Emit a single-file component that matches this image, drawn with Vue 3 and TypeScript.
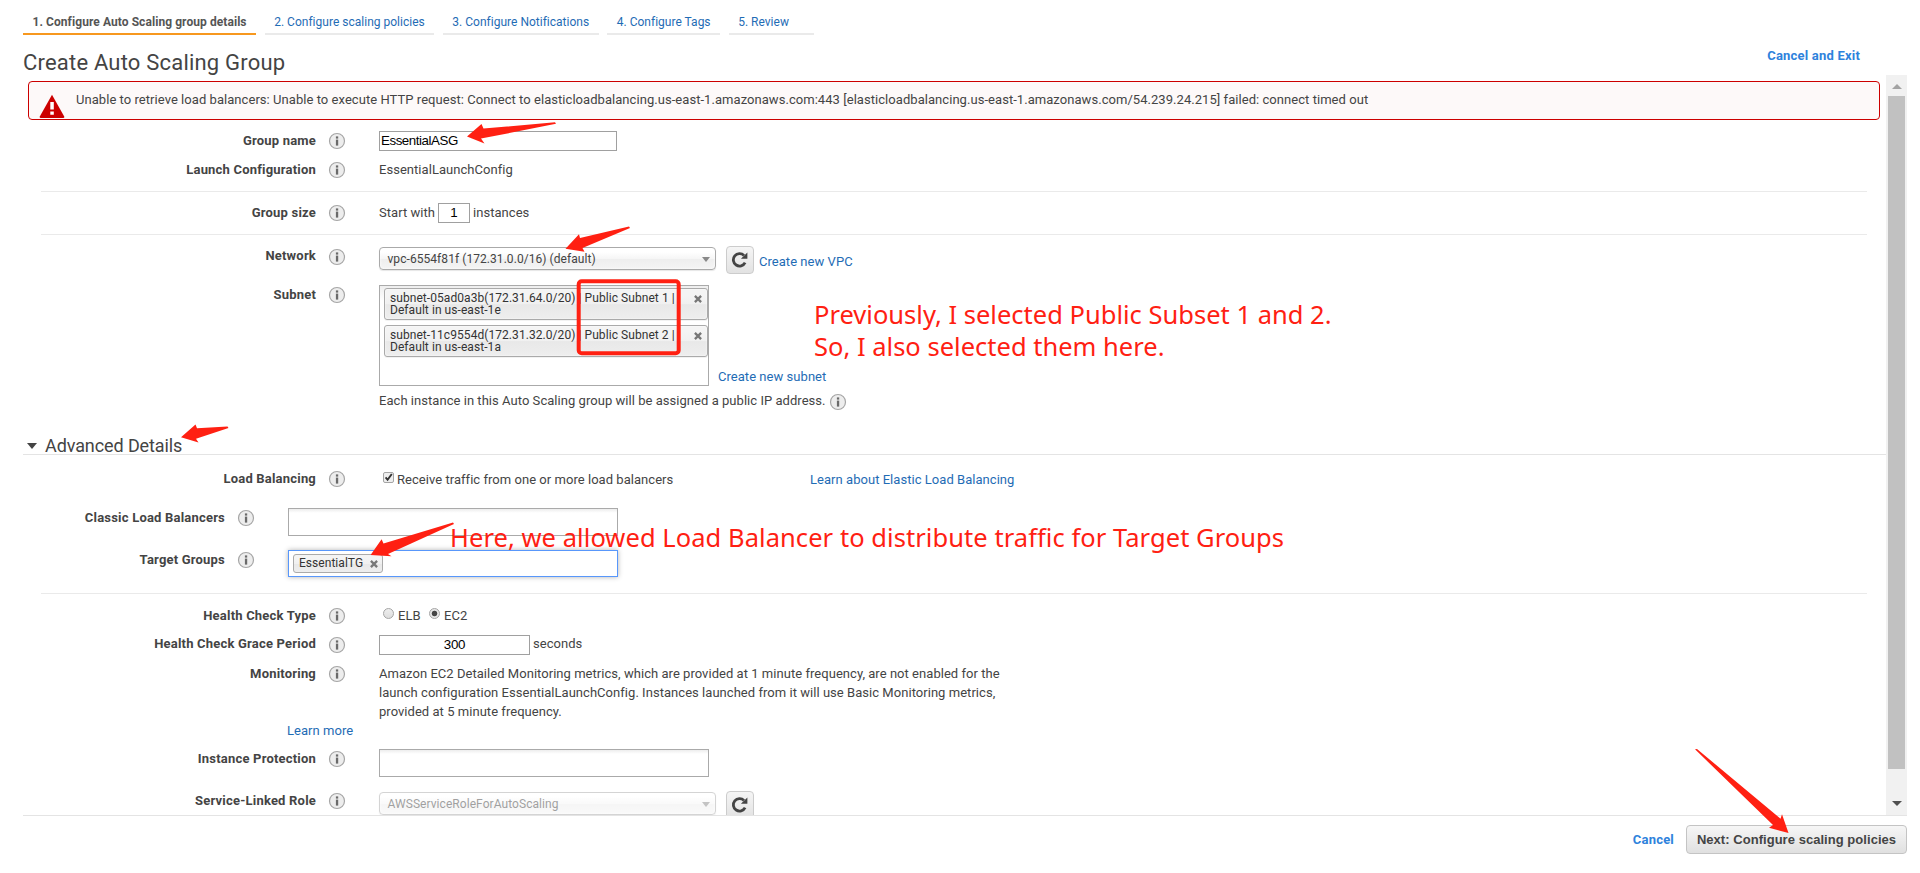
<script setup lang="ts">
import { h, type FunctionalComponent } from 'vue'

interface Step { label: string; active?: boolean }

const steps: Step[] = [
  { label: '1. Configure Auto Scaling group details', active: true },
  { label: '2. Configure scaling policies' },
  { label: '3. Configure Notifications' },
  { label: '4. Configure Tags' },
  { label: '5. Review' },
]

const subnets: string[][] = [
  ['subnet-05ad0a3b(172.31.64.0/20) | Public Subnet 1 |', 'Default in us-east-1e'],
  ['subnet-11c9554d(172.31.32.0/20) | Public Subnet 2 |', 'Default in us-east-1a'],
]

const arrows: string[] = [
  '467,136.5 481.5,124 483.5,128.5 555,122.3 556,123.8 481,138.6 484.5,143.5',
  '565.5,248.7 579,234.3 580,238 629,226.5 630,228 582.5,248 584.5,251.7',
  '181,437.3 195.5,424.5 197,428.2 227.5,426.5 228.5,428 196,438.8 198.5,442.5',
  '370.6,555 381.6,539.2 383.5,543.5 453,522.5 454,524 388,554 391.5,556.3',
  '1788.5,833 1782,814.2 1780.5,818.7 1697,749 1695,749.3 1773,825 1769,827.8',
]

const InfoIcon: FunctionalComponent = () =>
  h('svg', { width: 18, height: 18, viewBox: '0 0 18 18' }, [
    h('circle', { cx: 9, cy: 9, r: 7.5, fill: '#ededed', stroke: '#a6a6a6', 'stroke-width': 1.2 }),
    h('rect', { x: 7.9, y: 4.4, width: 2.3, height: 2.2, fill: '#6a6a6a' }),
    h('rect', { x: 7.9, y: 7.6, width: 2.3, height: 6, fill: '#6a6a6a' }),
  ])

const RefreshIcon: FunctionalComponent = () =>
  h('svg', { width: 18, height: 18, viewBox: '0 0 18 18' }, [
    h('path', { d: 'M14.1 11.6A6.2 6.2 0 1 1 13 4.5', fill: 'none', stroke: '#444', 'stroke-width': 2.8 }),
    h('path', { d: 'M16.4 1.4V7.8H9.9Z', fill: '#444' }),
  ])

const CloseIcon: FunctionalComponent = () =>
  h('svg', { width: 8, height: 8, viewBox: '0 0 8 8' }, [
    h('path', { d: 'M.9 .9L7.1 7.1M7.1 .9L.9 7.1', stroke: '#777', 'stroke-width': 2.3 }),
  ])
</script>

<template>
  <div class="page">
    <nav class="steps">
      <a v-for="s in steps" :key="s.label" class="step" :class="{ active: s.active }">{{ s.label }}</a>
    </nav>
    <header class="head">
      <h1>Create Auto Scaling Group</h1>
      <a class="exit">Cancel and Exit</a>
    </header>

    <div class="frame">
      <main class="panel">
        <div class="alert">
          <svg class="warn" width="26" height="24" viewBox="0 0 26 24">
            <path d="M13 .8 25.2 22.6Q25.8 24 24.4 24H1.6Q.2 24 .8 22.6Z" fill="#c00" />
            <path d="M11.3 8h3.5v7.6h-3.5zM11.3 17.6h3.5v3.2h-3.5z" fill="#fff" />
          </svg>
          <span class="alert-text">Unable to retrieve load balancers: Unable to execute HTTP request: Connect to elasticloadbalancing.us-east-1.amazonaws.com:443 [elasticloadbalancing.us-east-1.amazonaws.com/54.239.24.215] failed: connect timed out</span>
        </div>

        <div class="row name-row">
          <label>Group name</label><InfoIcon class="info" />
          <div class="field group-name">EssentialASG</div>
        </div>
        <div class="row launch-row">
          <label>Launch Configuration</label><InfoIcon class="info" />
          <span>EssentialLaunchConfig</span>
        </div>
        <hr />
        <div class="row size-row">
          <label>Group size</label><InfoIcon class="info" />
          <span>Start with</span>
          <div class="field count">1</div>
          <span>instances</span>
        </div>
        <hr />
        <div class="row network-row">
          <label>Network</label><InfoIcon class="info" />
          <div class="select"><span>vpc-6554f81f (172.31.0.0/16) (default)</span><i class="caret"></i></div>
          <div class="refresh"><RefreshIcon /></div>
          <a class="vpc-link">Create new VPC</a>
        </div>
        <div class="row subnet-row">
          <label>Subnet</label><InfoIcon class="info" />
          <div class="multi tall">
            <div v-for="s in subnets" :key="s[0]" class="token">
              <div><div v-for="line in s" :key="line" class="line">{{ line }}</div></div>
              <CloseIcon class="x" />
            </div>
          </div>
          <a class="subnet-link">Create new subnet</a>
        </div>
        <div class="row note-row">
          <span>Each instance in this Auto Scaling group will be assigned a public IP address.</span>
          <InfoIcon class="note-info" />
        </div>

        <div class="advanced"><i class="fold"></i><span>Advanced Details</span></div>

        <div class="row lb-row">
          <label>Load Balancing</label><InfoIcon class="info" />
          <svg class="check" width="11" height="11" viewBox="0 0 11 11">
            <rect x=".5" y=".5" width="10" height="10" rx="1.5" fill="#eee" stroke="#a5a5a5" />
            <path d="M2.6 5.4 4.6 7.8 8.8 2" fill="none" stroke="#333" stroke-width="1.9" />
          </svg>
          <span class="lb-text">Receive traffic from one or more load balancers</span>
          <a>Learn about Elastic Load Balancing</a>
        </div>
        <div class="row nested classic-row">
          <label>Classic Load Balancers</label><InfoIcon class="info" />
          <div class="multi"></div>
        </div>
        <div class="row nested target-row">
          <label>Target Groups</label><InfoIcon class="info" />
          <div class="multi focused">
            <div class="chip">EssentialTG<CloseIcon class="chip-x" /></div>
          </div>
        </div>
        <hr />
        <div class="row type-row">
          <label>Health Check Type</label><InfoIcon class="info" />
          <i class="radio"></i><span class="opt">ELB</span>
          <i class="radio on"></i><span class="opt">EC2</span>
        </div>
        <div class="row grace-row">
          <label>Health Check Grace Period</label><InfoIcon class="info" />
          <div class="field grace">300</div>
          <span>seconds</span>
        </div>
        <div class="row monitor-row">
          <label>Monitoring</label><InfoIcon class="info" />
          <p>
            Amazon EC2 Detailed Monitoring metrics, which are provided at 1 minute frequency, are not enabled for the<br />
            launch configuration EssentialLaunchConfig. Instances launched from it will use Basic Monitoring metrics,<br />
            provided at 5 minute frequency.
          </p>
        </div>
        <div class="more"><a>Learn more</a></div>
        <div class="row protect-row">
          <label>Instance Protection</label><InfoIcon class="info" />
          <div class="multi"></div>
        </div>
        <div class="row role-row">
          <label>Service-Linked Role</label><InfoIcon class="info" />
          <div class="select disabled"><span>AWSServiceRoleForAutoScaling</span><i class="caret"></i></div>
          <div class="refresh"><RefreshIcon /></div>
        </div>
      </main>

      <div class="scrollbar">
        <i class="up"></i>
        <div class="thumb"></div>
        <i class="down"></i>
      </div>
    </div>

    <footer class="foot">
      <a class="cancel">Cancel</a>
      <div class="next">Next: Configure scaling policies</div>
    </footer>

    <svg class="marks" width="1920" height="873" viewBox="0 0 1920 873">
      <polygon v-for="a in arrows" :key="a" :points="a" fill="#ff2012" />
      <rect x="578.7" y="281.3" width="100" height="72" rx="3" fill="none" stroke="#ff2012" stroke-width="4" />
    </svg>
    <div class="remark first">Previously, I selected Public Subset 1 and 2.<br />So, I also selected them here.</div>
    <div class="remark second">Here, we allowed Load Balancer to distribute traffic for Target Groups</div>
  </div>
</template>

<style>
body {
  margin: 0;
  background: #fff;
}
</style>

<style scoped>
.page {
  position: relative;
  width: 1920px;
  height: 873px;
  overflow: hidden;
  background: #fff;
  color: #444;
  font: 13px/19px Roboto, "Liberation Sans", sans-serif;
  letter-spacing: 0.04px;
}
.page * { box-sizing: border-box; }
.page svg { display: block; flex: none; }
.page span, .page a, .page label { white-space: nowrap; }
a { color: #1f6cb5; }

.steps {
  display: flex;
  gap: 8.6px;
  padding: 9px 0 0 23px;
}
.step {
  height: 26px;
  min-width: 85px;
  padding: 0 9.5px;
  border-bottom: 2px solid #eaeaea;
  font-size: 12px;
  line-height: 26px;
  letter-spacing: 0.01px;
}
.step.active {
  border-color: #f7981f;
  color: #555;
  font-weight: 700;
  letter-spacing: 0.07px;
}
.head {
  display: flex;
  justify-content: space-between;
  height: 40px;
  padding: 0 60px 0 23px;
}
h1 {
  margin: 13px 0 0;
  font-size: 22px;
  font-weight: 400;
  line-height: 30px;
  letter-spacing: 0.2px;
}
.exit {
  margin-top: 11px;
  color: #2e82dc;
  font-weight: 700;
  letter-spacing: 0.2px;
}

.frame {
  display: flex;
  width: 1884px;
  height: 741px;
  margin-left: 23px;
  border-bottom: 1px solid #e4e4e4;
  overflow: hidden;
}
.panel {
  width: 1863px;
  height: 740px;
  overflow: hidden;
}
.alert {
  display: flex;
  width: 1852px;
  height: 39px;
  margin: 6px 0 0 5px;
  border: 1px solid #c00;
  border-radius: 4px;
  background: #fdf9f9;
}
.warn { margin: 11.5px 0 0 10px; }
.alert-text {
  margin: 8px 0 0 11px;
  letter-spacing: 0.05px;
}

hr {
  width: 1826px;
  height: 1px;
  margin: 0 0 0 18px;
  border: 0;
  background: #eaeaea;
}
.row {
  display: flex;
  align-items: flex-start;
}
.row label {
  width: 293px;
  text-align: right;
  font-weight: 700;
  letter-spacing: 0.2px;
}
.nested label { width: 202px; }
.info { margin: 1px 33px 0 12px; }
.name-row { height: 30px; margin-top: 6px; padding-top: 5px; }
.launch-row { height: 29px; margin-bottom: 6px; padding-top: 4px; }
.size-row { height: 30px; margin: 6px 0; padding-top: 5px; }
.network-row { height: 38px; margin-top: 12px; }
.network-row label { margin-top: -1px; }
.subnet-row { height: 101px; }
.note-row { height: 19px; margin: 6px 0 0 356px; }
.note-row span { margin-top: -1px; }
.note-info { margin: 1px 0 0 3px; }
.lb-row { height: 19px; margin-top: 15px; }
.lb-row label { margin-top: -1px; }
.lb-row .info { margin-top: 0; }
.lb-row .check { margin-top: 2px; }
.classic-row { margin-top: 19px; }
.target-row { margin: 14px 0 16px; }
.type-row { margin-top: 12px; }
.grace-row { height: 20px; margin-top: 10px; }
.grace-row label, .grace-row span { margin-top: -1px; }
.monitor-row { margin-top: 9px; }
.more { padding-left: 264px; }
.protect-row { margin-top: 9px; }
.role-row { margin-top: 15px; }
.role-row label { margin-top: -1px; }
.role-row .info { margin-top: 0; }

.field {
  height: 20px;
  border: 1px solid #a0a0a0;
  background: #fff;
  color: #000;
  font: 13.33px/18px "Liberation Sans", Arial, sans-serif;
}
.group-name {
  width: 238px;
  padding-left: 1px;
  letter-spacing: -0.45px;
}
.count {
  width: 32px;
  margin: 0 3px;
  text-align: center;
}
.grace {
  width: 151px;
  margin-right: 3px;
  text-align: center;
  letter-spacing: -0.3px;
}

.select {
  display: flex;
  justify-content: space-between;
  align-items: center;
  width: 337px;
  height: 23px;
  padding: 1px 5px 0 7.5px;
  border: 1px solid #aaa;
  border-radius: 4px;
  background: linear-gradient(#fff 20%, #f6f6f6 50%, #eee 52%, #f4f4f4 100%);
  box-shadow: inset 0 0 3px #fff, 0 1px 1px rgba(0, 0, 0, 0.1);
  font-size: 12px;
  line-height: 20px;
  letter-spacing: 0.06px;
}
.select.disabled { opacity: 0.5; }
.caret {
  border: 4px solid transparent;
  border-top: 5px solid #888;
  border-bottom: 0;
}
.refresh {
  display: flex;
  align-items: center;
  justify-content: center;
  width: 28px;
  height: 28px;
  margin: -1px 5px 0 10px;
  border: 1px solid #ccc;
  border-radius: 4px;
  background: linear-gradient(#f5f5f5, #e2e2e2);
}
.vpc-link { margin-top: 5px; }
.subnet-link { margin: 82px 0 0 9px; }

.multi {
  width: 330px;
  height: 28px;
  border: 1px solid #aaa;
  background: linear-gradient(#eee 1%, #fff 15%);
}
.multi.tall {
  height: 101px;
  padding: 2px 0 0 4px;
  background: linear-gradient(#eee, #fff 15px);
}
.multi.focused {
  height: 27px;
  padding: 3px 4px;
  border-color: #5897fb;
  background: #fff;
  box-shadow: 0 0 5px rgba(0, 0, 0, 0.3);
}
.token {
  display: flex;
  justify-content: space-between;
  width: 324px;
  height: 32px;
  margin-bottom: 5px;
  padding: 3px 5px 0 5px;
  border: 1px solid #aaa;
  border-radius: 3px;
  background: linear-gradient(#f4f4f4 20%, #f0f0f0 50%, #e8e8e8 52%, #eee 100%);
  box-shadow: 0 0 2px #fff inset, 0 1px 0 rgba(0, 0, 0, 0.05);
  color: #333;
}
.token .line {
  font-size: 12px;
  line-height: 12px;
  letter-spacing: 0.065px;
  white-space: nowrap;
}
.token .x { margin: 3px 0 0; }
.chip {
  display: flex;
  width: 90px;
  height: 19px;
  padding-left: 5px;
  border: 1px solid #aaa;
  border-radius: 3px;
  background: linear-gradient(#f4f4f4 20%, #f0f0f0 50%, #e8e8e8 52%, #eee 100%);
  color: #333;
  font-size: 12px;
  line-height: 17px;
}
.chip-x { margin: 5px 0 0 7px; }

.advanced {
  display: flex;
  align-items: center;
  height: 19px;
  margin-top: 25px;
  border-bottom: 1px solid #e4e4e4;
  font-size: 18px;
  line-height: 18px;
  letter-spacing: -0.1px;
}
.advanced span { padding-top: 1px; }
.fold {
  margin: 1px 8px 0 4px;
  border: 5px solid transparent;
  border-top: 6px solid #444;
  border-bottom: 0;
}

.check { margin: 2px 4px 0 4px; }
.lb-text { width: 413px; margin-left: -1px; }
.radio {
  width: 11px;
  height: 11px;
  margin: 2px 4px 0 4px;
  border: 1px solid #a5a5a5;
  border-radius: 50%;
  background: linear-gradient(#eee, #ddd);
}
.radio.on { background: radial-gradient(circle, #444 0 2.4px, #e6e6e6 3.2px); }
.opt { width: 27px; }
p { margin: 0; white-space: nowrap; }

.scrollbar {
  display: flex;
  flex-direction: column;
  align-items: center;
  width: 21px;
  height: 740px;
  background: #f1f1f1;
}
.up {
  margin-top: 9px;
  border: 5px solid transparent;
  border-top: 0;
  border-bottom: 5px solid #a3a3a3;
}
.thumb {
  width: 17px;
  height: 673px;
  margin-top: 7px;
  background: #c1c1c1;
}
.down {
  margin-top: 32px;
  border: 5px solid transparent;
  border-bottom: 0;
  border-top: 5px solid #505050;
}

.foot {
  display: flex;
  justify-content: flex-end;
  align-items: center;
  gap: 12px;
  height: 47px;
  padding-right: 13px;
}
.cancel {
  color: #2e82dc;
  font-weight: 700;
  letter-spacing: 0.2px;
}
.next {
  width: 221px;
  height: 29px;
  border: 1px solid #c4c4c4;
  border-radius: 4px;
  background: linear-gradient(#f6f6f6, #e0e0e0);
  font: 700 13px/27px "Liberation Sans", Arial, sans-serif;
  text-align: center;
}

.marks {
  position: absolute;
  left: 0;
  top: 0;
}
.remark {
  position: absolute;
  color: #ff2012;
  font: 25.5px/32px "Noto Sans", "Open Sans", sans-serif;
  letter-spacing: 0.01px;
  white-space: nowrap;
}
.first { left: 814px; top: 298px; }
.second { left: 450px; top: 521px; letter-spacing: 0.06px; }
</style>
